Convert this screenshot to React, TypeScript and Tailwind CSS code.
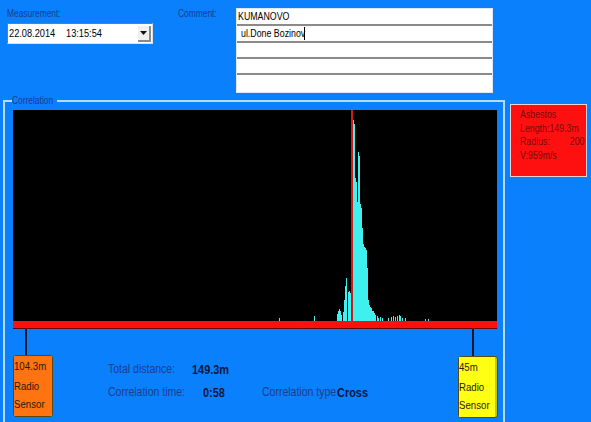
import React from "react";

const FONT = "font-['Liberation_Sans',Arial,sans-serif]";

// the original UI uses a narrow face; squeeze Liberation Sans to match
function T({ children, right }: { children: React.ReactNode; right?: boolean }) {
  return (
    <span className={`inline-block whitespace-nowrap scale-x-[0.84] ${right ? "origin-right" : "origin-left"}`}>
      {children}
    </span>
  );
}

// cyan correlation bars: [x, top] in page pixels, chart starts at x 13 / y 110
const bars: [number, number][] = [
  [279, 318], [314, 316], [337, 314], [338, 311], [339, 309], [340, 311], [341, 315],
  [343, 312], [344, 300], [345, 286], [346, 278], [348, 292], [349, 291], [350, 293],
  [351, 317], [353, 120], [354, 124], [355, 178], [356, 182], [357, 202], [358, 152],
  [359, 156], [360, 204], [361, 208], [362, 228], [363, 244], [364, 247], [365, 248],
  [366, 250], [367, 268], [368, 300], [369, 305], [370, 307], [371, 308], [372, 311],
  [373, 311], [374, 313], [375, 315], [377, 316], [378, 318], [380, 317], [382, 318],
  [388, 318], [391, 317], [393, 316], [395, 317], [397, 316], [399, 315], [400, 316],
  [402, 318], [405, 318], [425, 319], [428, 319],
];

function CorrelationChart() {
  return (
    <svg width="484" height="211" viewBox="0 0 484 211" className="block" shapeRendering="crispEdges">
      <rect width="484" height="211" fill="#000" />
      {bars.map(([x, top]) => (
        <rect key={x} x={x - 13} y={top - 110} width="1" height={321 - top} fill="#3ef0ee" />
      ))}
      <rect x={351 - 13} y="0" width="2" height="211" fill="#d01818" />
    </svg>
  );
}

function Sensor({ dist, color, side }: { dist: string; color: string; side: string }) {
  return (
    <div className={`flex h-[62px] w-[40px] rounded-[3px] ${side} border border-[#5a4a10]`}>
      <div className={`flex flex-1 flex-col text-[11.5px] leading-[20px] text-[#2a1a00] ${color}`}>
        <T>{dist}</T>
        <T>Radio</T>
        <span className="-mt-[2px]">
          <T>Sensor</T>
        </span>
      </div>
    </div>
  );
}

export default function App() {
  return (
    <div className={`h-[422px] w-[591px] overflow-hidden bg-[#0a80fd] ${FONT}`}>
      {/* top: measurement + comment */}
      <div className="flex h-[100px] pt-[8px]">
        <div className="w-[171px] pl-[7px]">
          <div className="h-[12px] text-[10px] leading-[12px] text-[#1a3c8c]">
            <T>Measurement:</T>
          </div>
          <div className="mt-[3px] flex h-[21px] w-[146px] items-center border border-t-[#7a7a7a] border-l-[#7a7a7a] border-r-[#e0e0e0] border-b-[#e0e0e0] bg-white pl-[1px]">
            <span className="flex flex-1 text-[11px] text-black">
              <span className="w-[57px]">
                <T>22.08.2014</T>
              </span>
              <T>13:15:54</T>
            </span>
            <div className="mr-[1px] flex h-[16px] w-[13px] items-center justify-center border-r-2 border-b-2 border-[#8a8a8a] bg-[#f0f0f0]">
              <svg width="7" height="4" viewBox="0 0 7 4">
                <path d="M0 0h7L3.5 4z" fill="#111" />
              </svg>
            </div>
          </div>
        </div>
        <div className="w-[65px] pl-[7px] text-[10px] leading-[12px] text-[#1a3c8c]">
          <T>Comment:</T>
        </div>
        <div className="flex h-[85px] w-[257px] flex-col border border-[#dfe8f8] bg-white text-[10.5px] leading-[15px] text-black">
          <div className="h-[15px] pl-[1px]">
            <T>KUMANOVO</T>
          </div>
          <div className="flex h-[17px] border-t-2 border-[#8a8a8a] pl-[4px]">
            <span className="w-[63px]">
              <T>ul.Done Bozinov</T>
            </span>
            <span className="mt-[1px] h-[13px] w-[1px] bg-black" />
          </div>
          <div className="h-[16px] border-t-2 border-[#8a8a8a]" />
          <div className="h-[16px] border-t-2 border-[#8a8a8a]" />
          <div className="flex-1 border-t-2 border-[#8a8a8a]" />
        </div>
      </div>

      {/* correlation group + info */}
      <div className="flex">
        <div className="relative ml-[3px] h-[330px] w-[502px] border-2 border-b-0 border-[#b4dcff] pl-[8px] pt-[8px]">
          <span className="absolute -top-[7px] left-[7px] w-[45px] overflow-hidden bg-[#0a80fd] text-[10px] leading-[12px] text-[#1a3c8c]">
            <T>Correlation</T>
          </span>
          <CorrelationChart />
          <div className="h-[8px] w-[484px] border-b border-[#600000] bg-[#ff1010]" />

          <div className="flex">
            {/* left sensor */}
            <div className="flex w-[40px] flex-col">
              <div className="ml-[12px] h-[26px] w-[2px] bg-[#101830]" />
              <Sensor dist="104.3m" color="bg-[#ff7410]" side="bg-[#b85210] pr-[2px]" />
            </div>

            {/* readings */}
            <div className="ml-[55px] w-[350px] pt-[33px] text-[12.5px] leading-[15px] text-[#1a3c8c]">
              <div className="flex">
                <span className="w-[84px]">
                  <T>Total distance:</T>
                </span>
                <span className="text-[13px] font-bold text-[#0c1640]">
                  <T>149.3m</T>
                </span>
              </div>
              <div className="mt-[8px] flex">
                <span className="w-[95px]">
                  <T>Correlation time:</T>
                </span>
                <span className="w-[59px] text-[13px] font-bold text-[#0c1640]">
                  <T>0:58</T>
                </span>
                <span className="w-[75px]">
                  <T>Correlation type</T>
                </span>
                <span className="text-[13px] font-bold text-[#0c1640]">
                  <T>Cross</T>
                </span>
              </div>
            </div>

            {/* right sensor */}
            <div className="flex w-[40px] flex-col">
              <div className="ml-[14px] h-[27px] w-[2px] bg-[#101830]" />
              <Sensor dist="45m" color="bg-[#ffff14]" side="bg-[#c8c400] pr-[3px]" />
            </div>
          </div>
        </div>

        <div className="ml-[5px] mt-[4px] flex h-[73px] w-[77px] flex-col border border-[#f0d0d0] bg-[#ff1010] pl-[9px] pt-[3px] text-[10.5px] leading-[13.5px] text-[#7a0808]">
          <T>Asbestos</T>
          <T>Length:149.3m</T>
          <span className="flex w-[65px] justify-between">
            <T>Radius:</T>
            <T right>200</T>
          </span>
          <T>V:959m/s</T>
        </div>
      </div>
    </div>
  );
}
